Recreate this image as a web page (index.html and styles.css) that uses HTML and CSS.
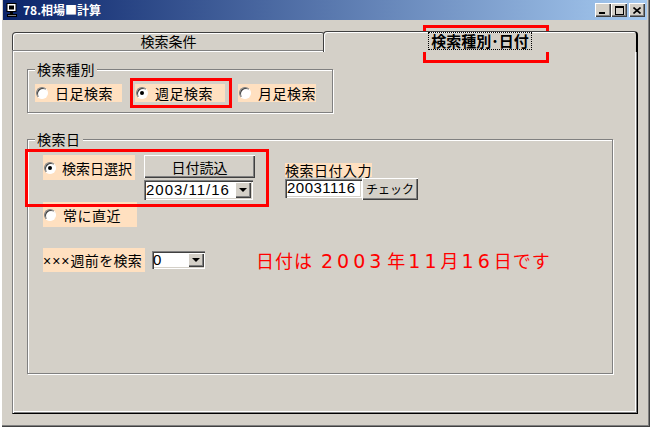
FILE: index.html
```html
<!DOCTYPE html>
<html lang="ja">

<head>
    <meta charset="UTF-8">
    <title>78.相場■計算</title>
    <link rel="stylesheet" href="styles.css">
</head>

<body>
    <div class="window">
        <div class="titlebar">
            <svg class="app-icon" width="12" height="15" viewBox="0 0 12 15">
                <rect x="1" y="0.5" width="9" height="8" fill="#fff" stroke="#000"></rect>
                <rect x="3" y="2.5" width="5" height="4" fill="#000"></rect>
                <rect x="4" y="9" width="3" height="2" fill="#000"></rect>
                <rect x="1" y="11" width="10" height="3" fill="#000"></rect>
                <rect x="2" y="12" width="8" height="1" fill="#808080"></rect>
            </svg>
            <span class="title">78.相場■計算</span>
            <div class="caption-btns">
                <span class="cbtn">
                    <svg width="8" height="7" viewBox="0 0 8 7"><rect x="0" y="5" width="6" height="2" fill="#000"></rect></svg>
                </span>
                <span class="cbtn">
                    <svg width="9" height="9" viewBox="0 0 9 9"><rect x="0.5" y="0.5" width="8" height="8" fill="none" stroke="#000"></rect><rect x="0" y="1" width="9" height="1" fill="#000"></rect></svg>
                </span>
                <span class="cbtn close">
                    <svg width="8" height="7" viewBox="0 0 8 7"><path d="M0.5 0.5 L7.5 6.5 M7.5 0.5 L0.5 6.5" stroke="#000" stroke-width="1.6"></path></svg>
                </span>
            </div>
        </div>

        <div class="client">
            <div class="tabs">
                <div class="tab">検索条件</div>
                <div class="tab active"><span class="focus">検索種別･日付</span></div>
            </div>

            <div class="panel">
                <fieldset class="group kind">
                    <legend>検索種別</legend>
                    <div class="radio-row">
                        <label class="opt o-day"><span class="radio"></span>日足検索</label>
                        <label class="opt o-week"><span class="radio on"></span>週足検索</label>
                        <label class="opt o-month"><span class="radio"></span>月足検索</label>
                    </div>
                </fieldset>

                <fieldset class="group date">
                    <legend>検索日</legend>
                    <div class="date-body">
                        <div class="row1">
                            <label class="opt o-pick"><span class="radio on"></span>検索日選択</label>
                            <div class="pick-col">
                                <button class="btn read-btn">日付読込</button>
                                <div class="combo date-combo">
                                    <span class="combo-text">2003/11/16</span>
                                    <span class="drop"><i></i></span>
                                </div>
                            </div>
                            <div class="input-col">
                                <span class="peach input-label">検索日付入力</span>
                                <div class="input-row">
                                    <span class="textbox">20031116</span>
                                    <button class="btn check-btn">チェック</button>
                                </div>
                            </div>
                        </div>

                        <label class="opt o-latest"><span class="radio"></span>常に直近</label>

                        <div class="row3">
                            <span class="peach weeks-label"><span class="xs">×××</span>週前を検索</span>
                            <div class="combo weeks-combo">
                                <span class="combo-text">0</span>
                                <span class="drop"><i></i></span>
                            </div>
                            <span class="result">日付は<span class="num n-year">2003</span>年<span class="num">11</span>月<span class="num">16</span>日です</span>
                        </div>
                    </div>
                </fieldset>
            </div>
        </div>

        <div class="mark mark-tab"></div>
        <div class="mark mark-week"></div>
        <div class="mark mark-date"></div>
    </div>
</body>

</html>
```

FILE: styles.css
```css
* {
    box-sizing: border-box;
}

body {
    margin: 0;
    background-color: #d4d0c8;
    font-family: "Noto Sans CJK JP", sans-serif;
    font-size: 14px;
    color: #000;
}

.window {
    position: relative;
    width: 650px;
    height: 427px;
    padding: 0 3px 3px 3px;
    background-color: #d4d0c8;
    box-shadow: inset 2px 0 #fff, inset -1px -1px #404040, inset -2px -2px #808080;
}

/* title bar */

.titlebar {
    height: 20px;
    display: flex;
    align-items: center;
    background: linear-gradient(to right, #0a246a, #a6caf0);
    padding-left: 3px;
}

.app-icon {
    display: block;
    margin-right: 5px;
}

.title {
    color: #fff;
    font-weight: bold;
    font-size: 12px;
    line-height: 14px;
}

.caption-btns {
    margin-left: auto;
    display: flex;
    padding-right: 2px;
}

.cbtn {
    width: 16px;
    height: 14px;
    display: flex;
    align-items: center;
    justify-content: center;
    background-color: #d4d0c8;
    box-shadow: inset 1px 1px #fff, inset -1px -1px #404040, inset -2px -2px #808080;
}

.cbtn.close {
    margin-left: 2px;
}

.cbtn svg {
    display: block;
}

/* tabs */

.client {
    padding: 11px 0 0 9px;
}

.tabs {
    display: flex;
    height: 19px;
    align-items: flex-end;
}

.tab {
    width: 313px;
    height: 18px;
    border: 1px solid #404040;
    border-bottom: none;
    border-radius: 4px 4px 0 0;
    box-shadow: inset 1px 1px #fff;
    text-align: center;
    line-height: 17px;
    font-size: 14px;
}

.tab.active {
    position: relative;
    z-index: 1;
    width: 315px;
    height: 21px;
    margin-left: -2px;
    margin-bottom: -2px;
    background-color: #d4d0c8;
    border-right: 2px solid #000;
    font-weight: bold;
    font-size: 15px;
    line-height: 16px;
    padding-top: 1px;
}

.focus {
    display: inline-block;
    outline: 1px dotted #000;
    padding: 0 2px;
    height: 16px;
    line-height: 16px;
}

.panel {
    width: 626px;
    height: 364px;
    border: 1px solid;
    border-color: #808080 #000 #000 #808080;
    box-shadow: inset 1px 1px #fff, inset -1px -1px #808080, inset -2px -2px #fff;
    padding: 10px 0 0 14px;
}

/* group boxes */

.group {
    margin: 0;
    padding: 0;
    min-inline-size: 0;
    border: 1px solid #808080;
    box-shadow: inset 1px 1px #fff, 1px 1px #fff;
}

.group legend {
    margin-left: 7px;
    padding: 0 2px;
    line-height: 16px;
    height: 16px;
    background-color: #d4d0c8;
    letter-spacing: 0.5px;
}

.kind {
    width: 306px;
    height: 52px;
}

.date {
    width: 586px;
    height: 243px;
    margin-top: 18px;
}

.radio-row {
    display: flex;
    padding: 7px 0 0 7px;
}

.date-body {
    padding: 8px 0 0 15px;
}

.opt {
    display: flex;
    align-items: center;
    background-color: #ffe0c0;
    padding-left: 1px;
    letter-spacing: 0.5px;
    white-space: nowrap;
}

.o-day {
    width: 87px;
    height: 18px;
}

.o-week {
    width: 90px;
    height: 18px;
    margin-left: 13px;
}

.o-month {
    width: 78px;
    height: 18px;
    margin-left: 13px;
}

.radio {
    width: 12px;
    height: 12px;
    margin-right: 7px;
    border-radius: 50%;
    background-color: #fff;
    border: 1px solid;
    border-color: #808080 #fff #fff #808080;
    box-shadow: inset 1px 1px #404040;
    display: flex;
    align-items: center;
    justify-content: center;
    flex-shrink: 0;
}

.radio.on::after {
    content: "";
    width: 4px;
    height: 4px;
    border-radius: 50%;
    background-color: #000;
}

/* search date rows */

.row1 {
    display: flex;
    align-items: flex-start;
}

.o-pick {
    width: 92px;
    height: 25px;
    letter-spacing: 0;
}

.o-pick .radio {
    margin-right: 6px;
}

.pick-col {
    margin-left: 9px;
    display: flex;
    flex-direction: column;
}

.btn {
    font-family: "Noto Sans CJK JP", sans-serif;
    background-color: #d4d0c8;
    border: none;
    padding: 0;
    color: #000;
    box-shadow: inset 1px 1px #fff, inset -1px -1px #404040, inset -2px -2px #808080;
}

.read-btn {
    width: 111px;
    height: 23px;
    font-size: 14px;
    line-height: 22px;
}

.combo {
    display: flex;
    align-items: center;
    background-color: #fff;
    padding: 2px;
    box-shadow: inset 1px 1px #808080, inset 2px 2px #404040, inset -1px -1px #fff, inset -2px -2px #d4d0c8;
}

.combo-text {
    flex: 1;
    font-family: "Liberation Sans", sans-serif;
    font-size: 15px;
    letter-spacing: 1px;
    line-height: 16px;
}

.drop {
    width: 16px;
    height: 16px;
    background-color: #d4d0c8;
    box-shadow: inset 1px 1px #fff, inset -1px -1px #404040, inset -2px -2px #808080;
    display: flex;
    align-items: center;
    justify-content: center;
}

.drop i {
    width: 0;
    height: 0;
    border-left: 4px solid transparent;
    border-right: 4px solid transparent;
    border-top: 4px solid #000;
}

.date-combo {
    width: 109px;
    height: 20px;
    margin-top: 2px;
}

.input-col {
    margin-left: 30px;
    display: flex;
    flex-direction: column;
    align-items: flex-start;
}

.peach {
    background-color: #ffe0c0;
}

.input-label {
    margin-top: 8px;
    height: 14px;
    line-height: 14px;
    letter-spacing: 0.5px;
}

.input-row {
    display: flex;
    align-items: flex-start;
}

.textbox {
    width: 77px;
    height: 19px;
    margin-top: 2px;
    background-color: #fff;
    padding: 1px 0 0 2px;
    font-family: "Liberation Sans", sans-serif;
    font-size: 15px;
    letter-spacing: 0.5px;
    line-height: 16px;
    box-shadow: inset 1px 1px #808080, inset 2px 2px #404040, inset -1px -1px #fff, inset -2px -2px #d4d0c8;
}

.check-btn {
    width: 56px;
    height: 22px;
    margin-top: 1px;
    font-size: 12px;
    line-height: 20px;
}

.o-latest {
    width: 94px;
    height: 25px;
    margin-top: 2px;
}

.row3 {
    display: flex;
    align-items: center;
    margin-top: 21px;
    height: 24px;
}

.weeks-label {
    width: 102px;
    height: 24px;
    line-height: 24px;
    letter-spacing: 0.3px;
}

.xs {
    font-family: "Liberation Sans", sans-serif;
    font-size: 14px;
    letter-spacing: 1px;
}

.weeks-combo {
    width: 53px;
    height: 18px;
    margin-left: 7px;
    padding: 1px;
}

.weeks-combo .drop {
    height: 14px;
}

.result {
    margin-left: 51px;
    color: #f00;
    font-size: 18px;
    line-height: 24px;
    letter-spacing: 1px;
}

.num {
    font-family: "DejaVu Sans", sans-serif;
    font-size: 19px;
    letter-spacing: 4px;
    padding-left: 2px;
}

.num.n-year {
    padding-left: 8px;
    padding-right: 2px;
}

/* red annotation boxes */

.mark {
    position: absolute;
    border: 3px solid #f00;
}

.mark-tab {
    left: 423px;
    top: 25px;
    width: 126px;
    height: 38px;
}

.mark-week {
    left: 130px;
    top: 78px;
    width: 102px;
    height: 30px;
}

.mark-date {
    left: 25px;
    top: 149px;
    width: 244px;
    height: 58px;
}
```
